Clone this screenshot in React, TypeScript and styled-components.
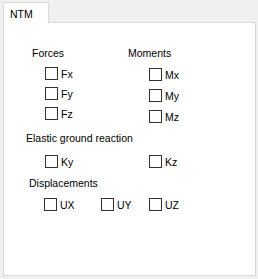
import React from "react";
import styled, { createGlobalStyle } from "styled-components";

const Global = createGlobalStyle`
  html, body { margin: 0; padding: 0; background: #f0f0f0; }
  body {
    font-family: "Liberation Sans", Arial, sans-serif;
    font-size: 10.5px;
    color: #000;
  }
`;

const Window = styled.div`
  width: 258px;
  height: 279px;
  padding: 2px 0 0 3px;
  box-sizing: border-box;
`;

const TabStrip = styled.div`
  display: flex;
  height: 20px;
`;

const Tab = styled.div`
  width: 46px;
  box-sizing: border-box;
  border: 1px solid #d9d9d9;
  border-bottom: none;
  background: #fff;
  padding: 5px 0 0 6px;
  line-height: 13px;
  position: relative;
  z-index: 1;
  margin-bottom: -1px;
`;

const Panel = styled.div`
  width: 253px;
  height: 254px;
  box-sizing: border-box;
  border: 1px solid #d9d9d9;
  background: #fff;
  display: flex;
  flex-direction: column;
`;

const Row = styled.div<{ $top: number }>`
  display: flex;
  margin-top: ${(p) => p.$top}px;
`;

const Column = styled.div<{ $left: number; $width?: number }>`
  display: flex;
  flex-direction: column;
  margin-left: ${(p) => p.$left}px;
  ${(p) => (p.$width ? `width: ${p.$width}px;` : "")}
`;

const Label = styled.div<{ $left?: number; $top?: number }>`
  line-height: 13px;
  margin-left: ${(p) => p.$left ?? 0}px;
  margin-top: ${(p) => p.$top ?? 0}px;
  white-space: nowrap;
`;

const CheckList = styled.div<{ $left: number; $top: number; $gap: number }>`
  display: flex;
  flex-direction: column;
  gap: ${(p) => p.$gap}px;
  margin-left: ${(p) => p.$left}px;
  margin-top: ${(p) => p.$top}px;
`;

const CheckRow = styled.div<{ $top: number }>`
  display: flex;
  margin-top: ${(p) => p.$top}px;
`;

const Check = styled.label<{ $x?: number; $w?: number }>`
  display: flex;
  align-items: center;
  height: 13px;
  gap: 3px;
  ${(p) => (p.$x !== undefined ? `margin-left: ${p.$x}px;` : "")}
  ${(p) => (p.$w !== undefined ? `width: ${p.$w}px;` : "")}
  white-space: nowrap;
`;

const Box = styled.span`
  width: 13px;
  height: 13px;
  box-sizing: border-box;
  border: 1px solid #333;
  background: #fff;
  flex: none;
`;

const Item = ({ text, x, w }: { text: string; x?: number; w?: number }) => (
  <Check $x={x} $w={w}>
    <Box />
    <span>{text}</span>
  </Check>
);

export default function App() {
  return (
    <>
      <Global />
      <Window>
        <TabStrip>
          <Tab>NTM</Tab>
        </TabStrip>
        <Panel>
          <Row $top={24}>
            <Column $left={28} $width={96}>
              <Label>Forces</Label>
              <CheckList $left={13} $top={7} $gap={7}>
                <Item text="Fx" />
                <Item text="Fy" />
                <Item text="Fz" />
              </CheckList>
            </Column>
            <Column $left={0}>
              <Label>Moments</Label>
              <CheckList $left={21} $top={8} $gap={8}>
                <Item text="Mx" />
                <Item text="My" />
                <Item text="Mz" />
              </CheckList>
            </Column>
          </Row>
          <Label $left={22} $top={9}>Elastic ground reaction</Label>
          <CheckRow $top={10}>
            <Item text="Ky" x={41} w={104} />
            <Item text="Kz" />
          </CheckRow>
          <Label $left={25} $top={9}>Displacements</Label>
          <CheckRow $top={8}>
            <Item text="UX" x={40} w={57} />
            <Item text="UY" w={48} />
            <Item text="UZ" />
          </CheckRow>
        </Panel>
      </Window>
    </>
  );
}
